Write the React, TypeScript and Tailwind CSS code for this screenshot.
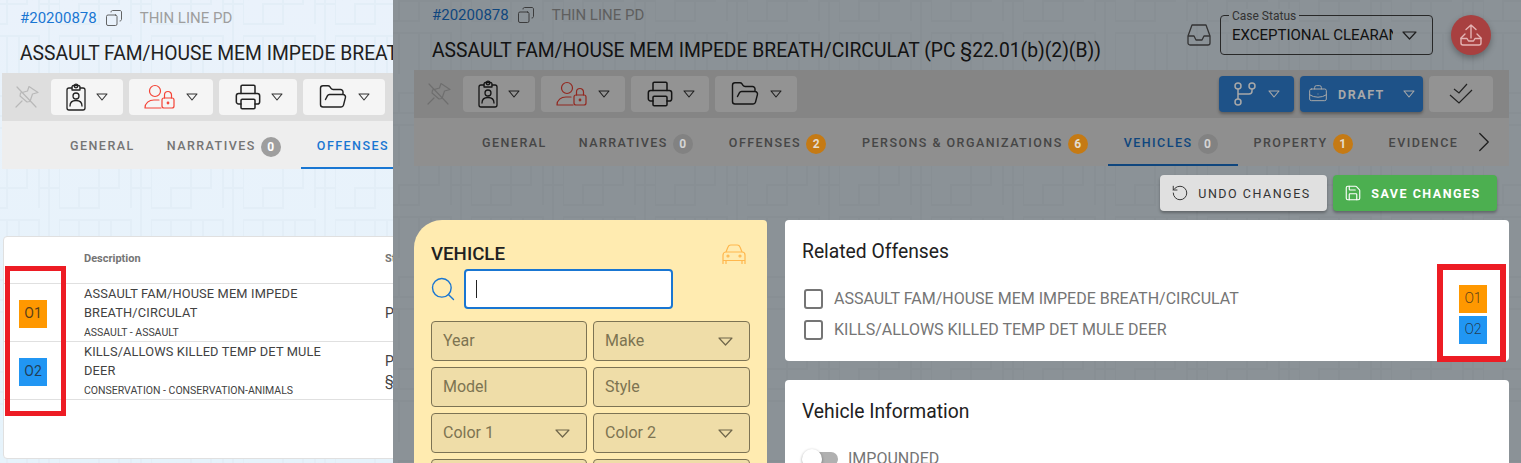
import React from "react";
import { Copy, Printer, FolderOpen, BriefcaseBusiness, RotateCcw, Save, ChevronRight, Search } from "lucide-react";

const Caret = ({ className = "text-[#333]" }: { className?: string }) => (
  <svg width="15" height="9" viewBox="0 0 15 9" fill="none" stroke="currentColor" strokeWidth="1.2" className={className}>
    <path d="M1 1h13L7.5 8z" strokeLinejoin="round" />
  </svg>
);

const SmallCaret = ({ className = "text-[#333]" }: { className?: string }) => (
  <svg width="12" height="8" viewBox="0 0 12 8" fill="none" stroke="currentColor" strokeWidth="1.1" className={className}>
    <path d="M1 1h10L6 7z" strokeLinejoin="round" />
  </svg>
);

const PinIcon = () => (
  <svg width="24" height="24" viewBox="0 0 24 24" fill="none" stroke="#b8b8b8" strokeWidth="1.2" strokeLinejoin="round" strokeLinecap="round">
    <path d="M14 1.5l9 6-5.5 1.5-2.5 7.5-3 .5-7-6 .5-3 7-2z" />
    <path d="M2 2l19 20M1 22l6-6" />
  </svg>
);

const BadgeUser = () => (
  <svg width="20" height="28" viewBox="0 0 20 28" fill="none" stroke="#222" strokeWidth="1.3" strokeLinecap="round" strokeLinejoin="round">
    <path d="M6 5H3a2 2 0 0 0-2 2v18a2 2 0 0 0 2 2h14a2 2 0 0 0 2-2V7a2 2 0 0 0-2-2h-3" />
    <path d="M6 7V4a1.5 1.5 0 0 1 1.5-1.5h5A1.5 1.5 0 0 1 14 4v3z" />
    <circle cx="10" cy="3" r="1.8" />
    <circle cx="10" cy="13" r="3" />
    <path d="M4 23c0-4 3-5.5 6-5.5s6 1.5 6 5.5" />
  </svg>
);

const UserLockIcon = () => (
  <svg width="32" height="26" viewBox="0 0 32 26" fill="none" stroke="#f44336" strokeWidth="1.2" strokeLinecap="round" strokeLinejoin="round">
    <circle cx="11" cy="7" r="5.5" />
    <path d="M1 24c0-5 4-8 9-8h5M1 24h16" />
    <rect x="18" y="14" width="12" height="10" rx="2" />
    <path d="M20.5 14v-3a3.5 3.5 0 0 1 7 0v3" />
    <circle cx="24" cy="19" r=".8" />
  </svg>
);

const BranchIcon = () => (
  <svg width="22" height="24" viewBox="0 0 22 24" fill="none" stroke="#a8a8a8" strokeWidth="1.5">
    <circle cx="4" cy="4" r="3" />
    <circle cx="18" cy="4" r="3" />
    <circle cx="4" cy="20" r="3" />
    <path d="M4 7v10M4 12h11a3 3 0 0 0 3-3V7" />
  </svg>
);

const DoubleCheck = () => (
  <svg width="24" height="22" viewBox="0 0 24 22" fill="none" stroke="#222" strokeWidth="1.2">
    <path d="M5 6l5 4L18 1M1 12l9 8L23 7" />
  </svg>
);

const InboxIcon = () => (
  <svg width="24" height="22" viewBox="0 0 24 22" fill="none" stroke="#555" strokeWidth="1.3" strokeLinejoin="round">
    <path d="M5 1h14l4 11v7a2 2 0 0 1-2 2H3a2 2 0 0 1-2-2v-7z" />
    <path d="M1 12h6l2 4h6l2-4h6" />
  </svg>
);

const UploadIcon = () => (
  <svg width="24" height="24" viewBox="0 0 24 24" fill="none" stroke="#e4b4b4" strokeWidth="1.4" strokeLinecap="round" strokeLinejoin="round">
    <path d="M12 15V2M7 6.5L12 2l5 4.5" />
    <path d="M6 11l-4 4v5a2 2 0 0 0 2 2h16a2 2 0 0 0 2-2v-5l-4-4" />
    <path d="M2 15.5h6l1.5 2.5h5l1.5-2.5h6" />
  </svg>
);

const CarIcon = () => (
  <svg width="24" height="21" viewBox="0 0 24 21" fill="none" stroke="#ffb74d" strokeWidth="1.2" strokeLinejoin="round">
    <path d="M1 20v-9a3 3 0 0 1 3-3h16a3 3 0 0 1 3 3v9M1 16.5h22" />
    <path d="M4 8l2-5a3 3 0 0 1 3-2h6a3 3 0 0 1 3 2l2 5" />
    <circle cx="6" cy="12" r="1" />
    <circle cx="18" cy="12" r="1" />
    <path d="M4 17v3M20 17v3" />
  </svg>
);

const Pattern = ({ id, x, y }: { id: string; x: number; y: number }) => (
  <svg className="absolute inset-0 w-full h-full" aria-hidden="true">
    <defs>
      <pattern id={id} x={x} y={y} width="92" height="92" patternUnits="userSpaceOnUse">
        <path
          d="M0 0V39H40V0M20 39V19H60V0M72 0V39M72 19H92M82 0V92M33 19H52M0 51H40M0 51V92M20 51V92M40 51V92M52 51H72V92M33 51H52V92"
          fill="none"
          stroke="#e3eef7"
          strokeWidth="2"
        />
      </pattern>
    </defs>
    <rect width="100%" height="100%" fill={`url(#${id})`} />
  </svg>
);

const ToolBtn = ({ w, children }: { w: string; children: React.ReactNode }) => (
  <div className={`${w} h-9 rounded bg-[#f5f5f5] flex items-center justify-center`}>{children}</div>
);

const LeftTools = () => (
  <div className="flex items-center">
    <div className="w-[49px] flex justify-center">
      <PinIcon />
    </div>
    <div className="flex gap-1.5">
      <ToolBtn w="w-[72px]">
        <div className="flex items-center gap-[10px]"><BadgeUser /><SmallCaret /></div>
      </ToolBtn>
      <ToolBtn w="w-[84px]">
        <div className="flex items-center gap-[10px]"><UserLockIcon /><SmallCaret /></div>
      </ToolBtn>
      <ToolBtn w="w-[78px]">
        <div className="flex items-center gap-[9px]"><Printer size={28} strokeWidth={1.3} color="#222" /><SmallCaret /></div>
      </ToolBtn>
      <ToolBtn w="w-[82px]">
        <div className="flex items-center gap-[10px]"><FolderOpen size={30} strokeWidth={1.15} color="#222" /><SmallCaret /></div>
      </ToolBtn>
    </div>
  </div>
);

const CaseId = () => (
  <div className="h-5 flex items-center text-[15px]">
    <span className="text-[#1976d2]">#20200878</span>
    <Copy size={18} strokeWidth={1.2} color="#555" className="ml-2 -scale-x-100" />
    <span className="ml-[17px] text-[#9e9e9e]">THIN LINE PD</span>
  </div>
);

const Title = ({ children }: { children: React.ReactNode }) => (
  <div className="mt-[14px] text-[19.3px] leading-6 font-normal text-[#212121] whitespace-nowrap">{children}</div>
);

const Count = ({ n, tone }: { n: number; tone: string }) => (
  <span className={`${tone} relative z-20 ml-[5px] w-5 h-5 rounded-full text-[12px] font-bold flex items-center justify-center tracking-normal`}>{n}</span>
);

const Tab = ({ label, active, count, tone }: { label: string; active?: boolean; count?: number; tone?: string }) => (
  <div className={`relative h-12 pl-4 ${count !== undefined ? "pr-5" : "pr-4"} pt-[3px] flex items-center shrink-0 text-[12.5px] font-medium tracking-[1.47px] ${active ? "text-[#1976d2]" : "text-[#757575]"}`}>
    {label}
    {count !== undefined && <Count n={count} tone={tone ?? "bg-[#9e9e9e] text-white"} />}
    {active && <span className="absolute left-0 right-0 bottom-0 h-0.5 bg-[#1976d2]" />}
  </div>
);

const OffBadge = ({ n, tone, small }: { n: string; tone: string; small?: boolean }) => (
  <div className={`${tone} w-7 h-7 flex items-center justify-center text-[14px] ${small ? "font-light" : ""} text-[#212121]/75`}>{n}</div>
);

const Row = ({ tone, n, a, b, sub, st }: { tone: string; n: string; a: string; b: string; sub: string; st: React.ReactNode }) => (
  <div className="h-[58px] border-b border-[#e0e0e0] flex items-center">
    <div className="w-[80px] pl-[15px] pt-0.5"><OffBadge n={n} tone={tone} /></div>
    <div className="w-[301px] text-[12.8px] leading-[19px] tracking-[0.15px] text-[#424242]">
      <div className="whitespace-nowrap">{a}</div>
      <div className="whitespace-nowrap">{b}</div>
      <div className="whitespace-nowrap pt-px text-[10.5px] text-[#424242] leading-[19px] tracking-normal">{sub}</div>
    </div>
    <div className="text-[14px] leading-[20px] text-[#424242] whitespace-nowrap">{st}</div>
  </div>
);

const LeftPanel = () => (
  <div className="relative w-[393px] shrink-0 h-full overflow-hidden bg-gradient-to-b from-[#eaf2fb] to-[#e6f3fb]">
    <Pattern id="pl" x={59} y={169} />
    <div className="relative w-[1200px]">
      <div className="h-[73px] pl-5 pt-2">
        <CaseId />
        <Title>ASSAULT FAM/HOUSE MEM IMPEDE BREATH/CIRCULAT (PC §22.01(b)(2)(B))</Title>
      </div>
      <div className="ml-0.5 h-12 bg-[#dedede] flex items-center">
        <LeftTools />
      </div>
      <div className="ml-0.5 h-12 bg-[#eeeeee] flex pl-[52px]">
        <Tab label="GENERAL" />
        <Tab label="NARRATIVES" count={0} />
        <Tab label="OFFENSES" active count={2} tone="bg-[#ff9800] text-white" />
      </div>
      <div className="mt-[67px] ml-[3px] w-[600px] h-[223px] bg-white border border-[#e0e0e0] rounded">
        <div className="h-[47px] border-b border-[#e0e0e0] flex pt-[14px] text-[11px] font-bold text-[#757575]">
          <div className="w-[80px]" />
          <div className="w-[301px]">Description</div>
          <div>Statute</div>
        </div>
        <Row tone="bg-[#ff9800]" n="O1" a="ASSAULT FAM/HOUSE MEM IMPEDE" b="BREATH/CIRCULAT" sub="ASSAULT - ASSAULT" st="PC" />
        <Row tone="bg-[#2196f3]" n="O2" a="KILLS/ALLOWS KILLED TEMP DET MULE" b="DEER" sub="CONSERVATION - CONSERVATION-ANIMALS" st={<><div>PA</div><div>§</div></>} />
      </div>
    </div>
    <div className="absolute left-[5px] top-[266px] w-[61px] h-[150px] border-[5px] border-[#ed1c24]" />
  </div>
);

const Field = ({ label, caret }: { label: string; caret?: boolean }) => (
  <div className="h-10 rounded border border-[#7c7354] bg-[#efdda8] flex items-center justify-between pl-[11px] pr-[16px] text-[16px] text-[#7d7452]">
    <span>{label}</span>
    {caret && <Caret className="text-[#6f664a]" />}
  </div>
);

const RelatedRow = ({ label, tone, n }: { label: string; tone: string; n: string }) => (
  <div className="h-[31px] flex items-center pl-[19px] pr-[22px]">
    <span className="w-[19px] h-[20px] rounded-[3px] border-2 border-[#757575]" />
    <span className="ml-[11px] flex-1 text-[16px] text-[#757575] whitespace-nowrap">{label}</span>
    <OffBadge n={n} tone={tone} small />
  </div>
);

const RightPanel = () => (
  <div className="relative flex-1 h-full overflow-hidden bg-[#e8f3fc]">
    <Pattern id="pr" x={78} y={166} />
    <div className="relative pl-[21px] pr-3">
      <div className="h-[70px] pl-[18px] pt-[5px] pr-[18px] flex justify-between">
        <div>
          <CaseId />
          <Title>ASSAULT FAM/HOUSE MEM IMPEDE BREATH/CIRCULAT (PC §22.01(b)(2)(B))</Title>
        </div>
        <div className="flex items-start pt-[10px]">
          <div className="mt-[9px]"><InboxIcon /></div>
          <div className="relative ml-[9px] w-[213px] h-10 rounded border border-[#444] flex items-center justify-between pl-[11px] pr-[15px]">
            <span className="absolute -top-[7px] left-[8px] px-[3px] bg-[#e8f3fc] text-[12px] leading-[14px] text-[#555]">Case Status</span>
            <span className="w-[161px] overflow-hidden whitespace-nowrap text-[15px] text-[#212121]">EXCEPTIONAL CLEARANCE</span>
            <Caret className="text-[#333]" />
          </div>
          <div className="relative z-20 ml-[18px] w-10 h-10 rounded-full bg-[#a84040] flex items-center justify-center shadow-[0_3px_6px_rgba(0,0,0,.3)]">
            <UploadIcon />
          </div>
        </div>
      </div>
      <div className="h-12 bg-[#dedede] flex items-center justify-between pr-4">
        <LeftTools />
        <div className="flex gap-1.5 relative z-20">
          <div className="w-[75px] h-9 rounded bg-[#1e5288] flex items-center justify-center gap-3 shadow-[0_2px_3px_rgba(0,0,0,.3)]">
            <BranchIcon /><SmallCaret className="text-[#a8a8a8]" />
          </div>
          <div className="w-[123px] h-9 rounded bg-[#1e5288] flex items-center justify-center gap-2 text-[12.5px] font-bold tracking-[1.5px] text-[#a8a8a8] shadow-[0_2px_3px_rgba(0,0,0,.3)]">
            <BriefcaseBusiness size={20} strokeWidth={1.2} />
            <span className="ml-0.5 pt-0.5">DRAFT</span>
            <SmallCaret className="ml-2.5 text-[#a8a8a8]" />
          </div>
          <div className="w-[64px] h-9 rounded bg-[#939393] flex items-center justify-center"><DoubleCheck /></div>
        </div>
      </div>
      <div className="h-12 bg-[#eeeeee] flex items-center pl-[52px]">
        <Tab label="GENERAL" />
        <Tab label="NARRATIVES" count={0} tone="bg-[#828282] text-[#d4d4d4]" />
        <Tab label="OFFENSES" count={2} tone="bg-[#c57a14] text-[#e4dccf]" />
        <Tab label="PERSONS & ORGANIZATIONS" count={6} tone="bg-[#c57a14] text-[#e4dccf]" />
        <Tab label="VEHICLES" active count={0} tone="bg-[#828282] text-[#d4d4d4]" />
        <Tab label="PROPERTY" count={1} tone="bg-[#c57a14] text-[#e4dccf]" />
        <Tab label="EVIDENCE" />
        <ChevronRight size={34} strokeWidth={0.9} color="#333" className="-ml-[7px]" />
      </div>
      <div className="h-[54px] pt-[9px] pr-3 flex justify-end gap-1.5 relative z-20">
        <div className="w-[167px] h-9 pr-[5px] rounded bg-[#e0e0e0] flex items-center justify-center gap-[9px] text-[12.5px] font-normal tracking-[1.52px] text-[#333] shadow-[0_2px_3px_rgba(0,0,0,.3)]">
          <RotateCcw size={18} strokeWidth={1.3} /><span className="pt-0.5">UNDO CHANGES</span>
        </div>
        <div className="w-[164px] h-9 pr-[5px] rounded bg-[#4caf50] flex items-center justify-center gap-[9px] text-[12.5px] font-bold tracking-[1.5px] text-white shadow-[0_2px_3px_rgba(0,0,0,.3)]">
          <Save size={18} strokeWidth={1.5} /><span className="pt-0.5">SAVE CHANGES</span>
        </div>
      </div>
      <div className="relative z-20 flex gap-[18px] items-start">
        <div className="w-[353px] h-[300px] bg-[#ffebb0] rounded-tl-[28px] rounded-tr-sm pt-[22px] pl-[17px] pr-[17px]">
          <div className="flex justify-between items-center pr-1">
            <span className="text-[18.7px] leading-6 font-medium text-[#212121]">VEHICLE</span>
            <CarIcon />
          </div>
          <div className="flex items-center mt-[3px]">
            <Search size={28} strokeWidth={1.2} color="#1976d2" className="-ml-0.5" />
            <div className="ml-[7px] w-[209px] h-10 rounded border-2 border-[#1976d2] bg-white flex items-center pl-[10px]">
              <span className="w-px h-[18px] bg-[#222]" />
            </div>
          </div>
          <div className="mt-3 grid grid-cols-[156px_157px] gap-x-1.5 gap-y-1.5">
            <Field label="Year" />
            <Field label="Make" caret />
            <Field label="Model" />
            <Field label="Style" />
            <Field label="Color 1" caret />
            <Field label="Color 2" caret />
            <Field label="" />
            <Field label="" />
          </div>
        </div>
        <div className="flex-1 flex flex-col gap-[19px]">
          <div className="relative h-[141px] bg-white rounded pt-5">
            <div className="pl-[17px] text-[19.3px] leading-6 font-normal text-[#212121]">Related Offenses</div>
            <div className="mt-[19px]">
              <RelatedRow label="ASSAULT FAM/HOUSE MEM IMPEDE BREATH/CIRCULAT" tone="bg-[#ff9800]" n="O1" />
              <RelatedRow label="KILLS/ALLOWS KILLED TEMP DET MULE DEER" tone="bg-[#2196f3]" n="O2" />
            </div>
            <div className="absolute left-[652px] top-[44px] w-[69px] h-[98px] border-[6px] border-[#ed1c24]" />
          </div>
          <div className="h-[120px] bg-white rounded pt-5">
            <div className="pl-[17px] text-[19.3px] leading-6 font-normal text-[#212121]">Vehicle Information</div>
            <div className="mt-[23px] pl-[17px] flex items-center">
              <span className="relative w-[38px] h-[14px] flex items-center">
                <span className="absolute left-[2px] w-[34px] h-[14px] rounded-full bg-[#b0b0b0]" />
                <span className="absolute left-0 w-5 h-5 rounded-full bg-white shadow-[0_1px_3px_rgba(0,0,0,.4)]" />
              </span>
              <span className="ml-2 text-[16px] text-[#757575]">IMPOUNDED</span>
            </div>
          </div>
        </div>
      </div>
    </div>
    <div className="absolute inset-0 z-10 bg-black/40" />
  </div>
);

export default function App() {
  return (
    <div className="w-[1521px] h-[463px] overflow-hidden flex font-['Roboto',sans-serif]">
      <LeftPanel />
      <RightPanel />
    </div>
  );
}
